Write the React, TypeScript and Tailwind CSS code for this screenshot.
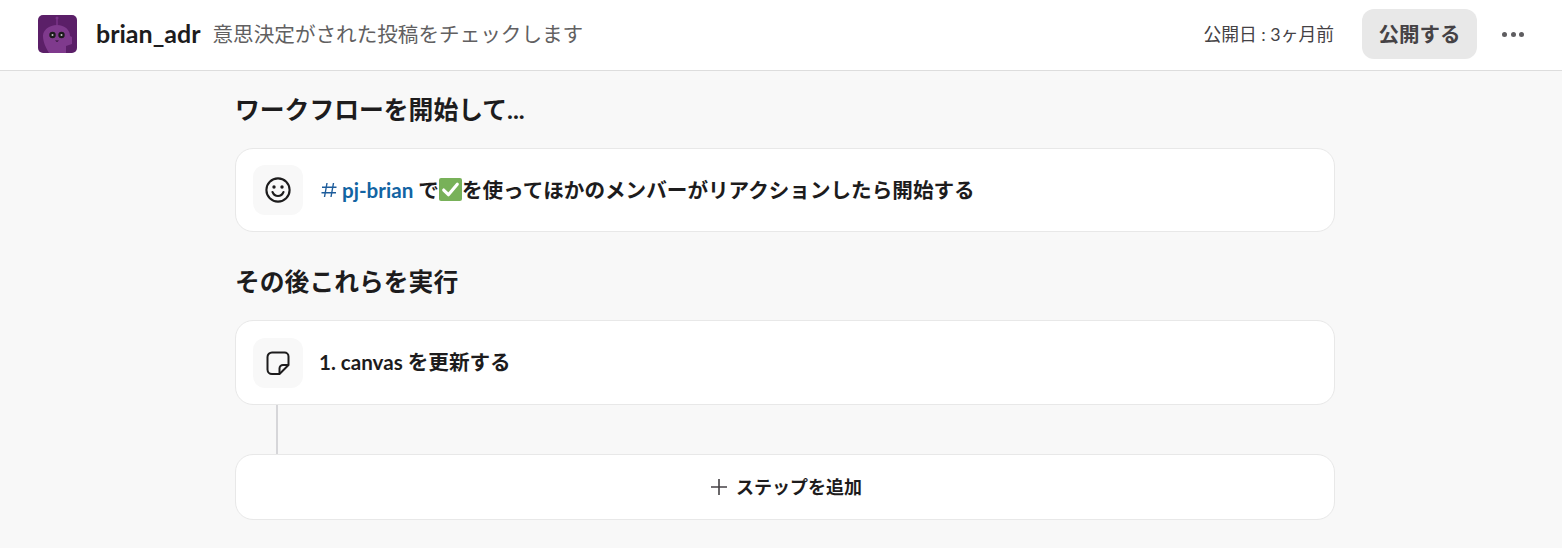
import React from 'react';

const FONT = "font-['Lato','Noto_Sans_CJK_JP',sans-serif]";

const BotAvatar = () => (
  <svg width="39" height="38" viewBox="0 0 39 38" className="rounded-[5px] shrink-0">
    <rect width="39" height="38" fill="#5b1f68" />
    <line x1="19" y1="3" x2="19" y2="10" stroke="#7a3488" strokeWidth="1.5" />
    <circle cx="19" cy="3" r="1.5" fill="#7a3488" />
    <path d="M5 21c0-6 6-11 14-11s13 5 13 11l2 1v7l-6 2v7H11C8 33 5 27 5 21z" fill="#7f3a8d" />
    <circle cx="14.500" cy="20" r="3.200" fill="#1d1c1d" />
    <circle cx="23.500" cy="20" r="3.200" fill="#1d1c1d" />
    <circle cx="14.500" cy="20" r="1" fill="#c9c3cc" />
    <circle cx="23.500" cy="20" r="1" fill="#c9c3cc" />
    <path d="M17 25.500h4l-2 1.500z" fill="#2c1430" />
  </svg>
);

const CheckEmoji = () => (
  <svg width="23" height="23" viewBox="0 0 22 22" className="inline-block shrink-0">
    <rect width="22" height="22" rx="2" fill="#78b159" />
    <path d="M4.500 11.500l4.500 4.500 8.500-10" fill="none" stroke="#fff" strokeWidth="3" strokeLinecap="round" strokeLinejoin="round" />
  </svg>
);

const HashIcon = () => (
  <svg width="16" height="16" viewBox="0 0 16 16" fill="none" stroke="#1d5c9b" strokeWidth="1.400" className="shrink-0">
    <path d="M6 1L3.500 15M12.500 1L10 15M1 5.200h14.500M0.500 10.800h14.500" />
  </svg>
);

const SmileIcon = () => (
  <svg width="26" height="26" viewBox="0 0 26 26" fill="none" stroke="#1d1c1d" strokeWidth="2.100" strokeLinecap="round">
    <circle cx="13" cy="13" r="11.600" />
    <path d="M7.500 15c1.200 2.800 3.200 4 5.500 4s4.300-1.200 5.500-4" />
    <circle cx="9" cy="10" r="1.700" fill="#1d1c1d" stroke="none" />
    <circle cx="17" cy="10" r="1.700" fill="#1d1c1d" stroke="none" />
  </svg>
);

const CanvasIcon = () => (
  <svg width="24" height="24" viewBox="0 0 24 24" fill="none" stroke="#1d1c1d" strokeWidth="2" strokeLinejoin="round">
    <path d="M13.500 23H6A4.500 4.500 0 0 1 1.500 18.500V6A4.500 4.500 0 0 1 6 1.500h12.500A4 4 0 0 1 22.500 5.500V14z" />
    <path d="M13.500 23v-5.500a3.500 3.500 0 0 1 3.500-3.500h5.500" />
  </svg>
);

const IconTile = ({ children }: { children: React.ReactNode }) => (
  <div className="w-[50px] h-[50px] rounded-xl bg-[#f8f8f8] flex items-center justify-center shrink-0">
    {children}
  </div>
);

export default function App() {
  return (
    <div className={`w-[1562px] h-[548px] overflow-hidden bg-[#f8f8f8] text-[#1d1c1d] ${FONT}`}>
      {/* Header */}
      <header className="h-[71px] bg-white border-b border-[#dddddd] flex items-center pl-[38px] pr-[37px] pb-[2px]">
        <BotAvatar />
        <span className="ml-[19px] text-[25px] font-bold">brian_adr</span>
        <span className="ml-[12px] text-[20.6px] text-[#616061]">意思決定がされた投稿をチェックします</span>
        <span className="ml-auto text-[17.800px] text-[#454245]">公開日 : 3ヶ月前</span>
        <button className="ml-[28px] w-[115px] h-[50px] rounded-xl bg-[#e8e8e8] text-[20.500px] font-bold text-[#454245]">
          公開する
        </button>
        <div className="ml-[25px] mr-[1px] w-[22px] flex justify-between">
          <span className="w-[5px] h-[5px] rounded-full bg-[#5e5d60]" />
          <span className="w-[5px] h-[5px] rounded-full bg-[#5e5d60]" />
          <span className="w-[5px] h-[5px] rounded-full bg-[#5e5d60]" />
        </div>
      </header>

      <main className="w-[1100px] ml-[235px] flex flex-col">
        <h2 className="mt-[22px] h-[34px] leading-[34px] text-[24.800px] font-bold">ワークフローを開始して...</h2>

        <div className="mt-[21px] h-[84px] bg-white border border-[#e8e8e8] rounded-[18px] flex items-center pl-[17px]">
          <IconTile>
            <SmileIcon />
          </IconTile>
          <div className="ml-[18px] flex items-center text-[20.600px] font-bold">
            <HashIcon />
            <span className="ml-[5px] text-[#1264a3]">pj-brian</span>
            <span className="ml-[5px]">で</span>
            <CheckEmoji />
            <span>を使ってほかのメンバーがリアクションしたら開始する</span>
          </div>
        </div>

        <h2 className="mt-[33px] h-[34px] leading-[34px] text-[24.800px] font-bold">その後これらを実行</h2>

        <div className="mt-[21px] h-[85px] bg-white border border-[#e8e8e8] rounded-[18px] flex items-center pl-[17px]">
          <IconTile>
            <CanvasIcon />
          </IconTile>
          <span className="ml-[16px] text-[20.600px] font-bold">1. canvas を更新する</span>
        </div>

        <div className="ml-[41px] w-[2px] h-[49px] bg-[#d6d6d9]" />

        <div className="h-[66px] bg-white border border-[#e8e8e8] rounded-[18px] flex items-center justify-center pl-[3px]">
          <svg width="16" height="16" viewBox="0 0 16 16" stroke="#454245" strokeWidth="1.600">
            <path d="M8 0v16M0 8h16" />
          </svg>
          <span className="ml-[9px] text-[18px] font-bold">ステップを追加</span>
        </div>
      </main>
    </div>
  );
}
